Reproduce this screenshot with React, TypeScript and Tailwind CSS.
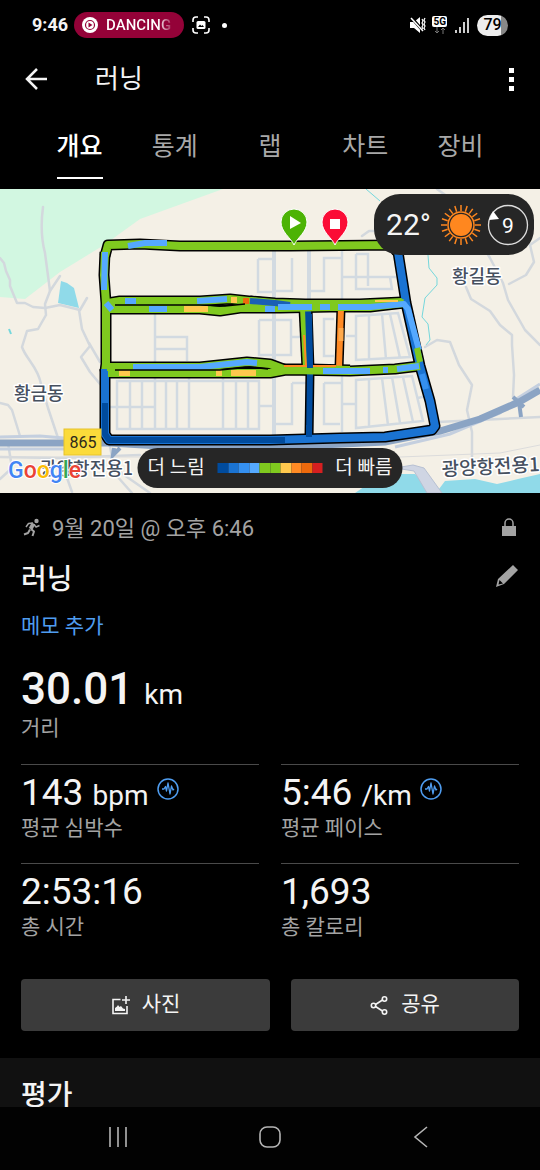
const tabs = ["개요", "통계", "랩", "차트", "장비"];

const stats = [
  { value: "143", unit: "bpm", label: "평균 심박수", hrv: true },
  { value: "5:46", unit: "/km", label: "평균 페이스", hrv: true },
  { value: "2:53:16", unit: "", label: "총 시간", hrv: false },
  { value: "1,693", unit: "", label: "총 칼로리", hrv: false },
];

const paceColors = [
  "#004b9d", "#1a73d2", "#3590f0", "#55a9ff", "#7fc91f",
  "#7fc91f", "#ffc84d", "#ff8a24", "#ee690c", "#d61f20",
];

const minorRoads = [
  "M43 207C41 222 41 238 45 253L50 291",
  "M0 258L4 263L6 271L10 280L10 286L17 303L25 303L33 307L45 308L60 305L80 310L87 298",
  "M60 276L50 291L45 304L46 315L38 329L27 331L22 347C26 359 38 367 41 384L48 408L58 438",
  "M79 310L82 329L90 346L81 357L90 372L100 384",
  "M89 343L100 362",
  "M0 403L8 405L12 410L20 436",
  "M0 457L60 458L140 455M0 479L12 468L8 443M60 458L72 492M110 447L116 475L132 493M117 470L150 493",
  "M362 236L369 231H380M437 189L455 202L478 238L490 258L503 283L508 300L525 330L540 345",
  "M509 284L526 275L534 262L530 245L540 238",
  "M466 287L471 299L490 311L500 325L512 335V345L514 375L513 397",
  "M425 347L437 340L450 342L459 365L472 385L467 410L472 432V460",
  "M400 434L438 422L540 417",
];

const blockRoads = [
  "M155 314V364M155 337H187V361M155 349H187M258 259V292H274M258 259H274M259 320V355H274M259 320H274",
  "M117 381H259V429H117ZM130 381V429M142 381V429M155 376V429M166 381V429M177 381V429M189 376V429M223 376V429M236 381V429M248 381V429M110 407H155M259 406H276",
  "M274 320H291V355H274M291 337H300M342 250V302M292 258V291H274M309 291H324V258H341",
  "M342 277H396M356 254H368V286M356 254V289H392L390 277",
  "M292 383V424H276M292 383H309M334 319H324V356H334M356 316V360L410 357L398 313ZM369 315V360M382 314L386 359M390 314L400 358M346 336H356",
  "M342 375V432M324 383H342M324 383V424H340M342 404H356M356 380V428L423 421L412 376ZM369 379V427M382 378L388 425M392 377L400 423M403 377L413 422M418 398L426 396",
];

type Segment = { d: string; color: string };

const mainRoute: Segment[] = [
  { d: "M105 256L108 245L140 244L180 246H290L392 245L397 252", color: "#7fc91f" },
  { d: "M105 252L104 275L106 303L106 309V364L105 372", color: "#7fc91f" },
  { d: "M105 369V434L109 440L180 440H270L340 438L385 437L432 430L435 426L430 401L420 366L406 303L398 252", color: "#1a73d2" },
  { d: "M108 303L120 301H200L230 299L258 302L275 304", color: "#7fc91f" },
  { d: "M108 309H200L220 311L240 308L280 308L330 307L370 307L404 303", color: "#7fc91f" },
  { d: "M250 301L275 303L305 304H360L402 302", color: "#7fc91f" },
  { d: "M107 367L115 367H200L247 362L270 364L286 370", color: "#7fc91f" },
  { d: "M108 373H270L286 370L350 371L395 369L420 366", color: "#7fc91f" },
  { d: "M280 369H308L350 370", color: "#7fc91f" },
];

const crossRoute: Segment[] = [
  { d: "M303 308L306 368", color: "#7fc91f" },
  { d: "M341 308L339 368", color: "#ff8a24" },
  { d: "M308 308L310 370L309 438", color: "#004b9d" },
];

const patches: Segment[] = [
  { d: "M128 246L145 243H167", color: "#55a9ff" },
  { d: "M105 252L104 290", color: "#55a9ff" },
  { d: "M106 303L112 310", color: "#55a9ff" },
  { d: "M125 301H136", color: "#55a9ff" },
  { d: "M149 309H167", color: "#55a9ff" },
  { d: "M197 301L227 299", color: "#55a9ff" },
  { d: "M231 300H237", color: "#ffc84d" },
  { d: "M243 301H249", color: "#ee690c" },
  { d: "M250 301L275 303L290 305", color: "#1a5fb4" },
  { d: "M184 309H208", color: "#ffc84d" },
  { d: "M265 309H275M278 307H312M320 307H330M338 307H370L404 304L408 309L419 350", color: "#55a9ff" },
  { d: "M133 367H200L247 362L257 363", color: "#55a9ff" },
  { d: "M119 373H130M216 373H222M231 373H256", color: "#ffc84d" },
  { d: "M323 371H370M383 370H388M397 369L419 366", color: "#55a9ff" },
  { d: "M417 348L420 362", color: "#7fc91f" },
  { d: "M422 374L426 389", color: "#3590f0" },
  { d: "M105 403V434L109 440L180 440H285", color: "#004b9d" },
  { d: "M309 437V425", color: "#004b9d" },
];

function MapPin({ x, color, stop }: { x: number; color: string; stop?: boolean }) {
  return (
    <g transform={`translate(${x} 244)`}>
      <path d="M0 1C-3 -6 -13 -12 -13 -22A13 13 0 0 1 13 -22C13 -12 3 -6 0 1Z" fill={color} stroke="#fff" strokeWidth="1" />
      {stop ? <rect x="-5" y="-25" width="10" height="10" fill="#fff" /> : <path d="M-4 -28L7 -21L-4 -15Z" fill="#fff" />}
    </g>
  );
}

function RouteMap() {
  return (
    <svg
      viewBox="0 189 540 304"
      preserveAspectRatio="xMidYMid slice"
      className="block h-full w-full font-['Noto_Sans_CJK_KR',sans-serif]"
      role="img"
      aria-label="러닝 경로"
    >
      <rect y="189" width="540" height="304" fill="#f4f0e6" />
      <path d="M0 189H223L140 219L104 245L60 272L25 299L0 297Z" fill="#d2f7e1" />
      <path d="M61 281L67 283L74 288L79 308L58 303Z" fill="#90dae9" />
      <path d="M355 493L383 474H415L436 493ZM436 493L445 481L475 479L497 484L518 479L540 474V493Z" fill="#90dae9" />
      <path d="M366 189L380 201M428 255L429 268L437 278V285L425 298L422 317L428 324L430 340L426 345" fill="none" stroke="#74d7dc" />
      <path d="M9 329L11 334" stroke="#74d7dc" strokeWidth="2" />

      <g fill="none" stroke="#d3d8dd" strokeWidth="2.5" strokeLinejoin="round" strokeLinecap="round">
        {minorRoads.map((d) => (
          <path key={d} d={d} />
        ))}
      </g>
      <g fill="none" stroke="#d2dae1" strokeWidth="2.5">
        {blockRoads.map((d) => (
          <path key={d} d={d} />
        ))}
        <path d="M274 250V437M309 250V300" strokeWidth="4" />
      </g>
      <path d="M275 460L400 457L500 453L540 445M0 457H140" fill="none" stroke="#dcdcdc" strokeWidth="1" />
      <path d="M395 468L413 465L424 468L442 493H427L414 471Z" fill="#cfd5e3" stroke="#b7c0d2" />
      <path d="M0 437L40 436L100 441M0 449H100M395 447L450 434L500 413L518 398L540 384" fill="none" stroke="#c4cfdf" strokeWidth="3" />
      <path d="M0 443H110L160 446L300 446L385 442L440 431L480 419L519 402L540 390" fill="none" stroke="#8ba4c4" strokeWidth="7" />
      <path d="M513 397L524 407M519 402L521 417M114 448L113 455L120 448" stroke="#8ba4c4" strokeWidth="4" fill="none" />

      <g fill="none" stroke="#000" strokeLinejoin="round">
        {mainRoute.map((s) => (
          <path key={s.d} d={s.d} strokeWidth="11" />
        ))}
        {crossRoute.map((s) => (
          <path key={s.d} d={s.d} strokeWidth="9" />
        ))}
      </g>
      <g fill="none" strokeLinejoin="round">
        {crossRoute.map((s) => (
          <path key={s.d} d={s.d} stroke={s.color} strokeWidth="6" />
        ))}
        {mainRoute.map((s) => (
          <path key={s.d} d={s.d} stroke={s.color} strokeWidth="8" />
        ))}
        {patches.map((s) => (
          <path key={s.d} d={s.d} stroke={s.color} strokeWidth="6" />
        ))}
        <path d="M304 335L306 365M284 366H336" stroke="#ff8a24" strokeWidth="2" />
        <path d="M341 328V341" stroke="#ffa94a" strokeWidth="5" />
        <path d="M375 301H398" stroke="#ffc84d" strokeWidth="2" />
        <path d="M309 314L310 368" stroke="#004b9d" strokeWidth="6" />
      </g>
      <path d="M115 305H200L225 306L245 304M115 370H220L250 367L268 369" fill="none" stroke="#000" strokeWidth="1.5" />

      <MapPin x={294} color="#4cb305" />
      <MapPin x={335} color="#fb0c36" stop />

      <g fill="#46505f" stroke="#fff" strokeWidth="3" strokeLinejoin="round" paintOrder="stroke" fontSize="18" fontWeight="500">
        <text x="452" y="283">황길동</text>
        <text x="14" y="400">황금동</text>
        <text x="40" y="475">광양항전용1</text>
        <text x="442" y="476" fontSize="19" transform="rotate(-3 442 476)">광양항전용1</text>
      </g>

      <rect x="64" y="429" width="37" height="26" fill="#fbdb3a" stroke="#e6c22c" />
      <text x="83" y="448" textAnchor="middle" fontSize="16" fill="#2d2a1c" className="font-[Roboto,sans-serif]">865</text>

      <text x="8" y="478" fontSize="23" fontWeight="500" stroke="#fff" strokeWidth="2" paintOrder="stroke" className="font-[Roboto,sans-serif]">
        <tspan fill="#4285f4">G</tspan>
        <tspan fill="#ea4335">o</tspan>
        <tspan fill="#fbbc05">o</tspan>
        <tspan fill="#4285f4">g</tspan>
        <tspan fill="#34a853">l</tspan>
        <tspan fill="#ea4335">e</tspan>
      </text>
    </svg>
  );
}

function SunIcon() {
  return (
    <svg viewBox="-20 -20 40 40" className="size-10" aria-hidden="true">
      <circle r="11" fill="#ff871f" />
      <circle r="13" fill="none" stroke="#ff871f" strokeWidth="1.5" />
      {Array.from({ length: 20 }, (_, i) => (
        <path key={i} d="M0 -14V-20" stroke="#ff871f" strokeWidth="1.5" transform={`rotate(${i * 18})`} />
      ))}
    </svg>
  );
}

function WindIcon() {
  return (
    <svg viewBox="0 0 42 42" className="size-[42px]" aria-label="바람 9">
      <circle cx="21" cy="21" r="19.5" fill="none" stroke="#ddd" strokeWidth="1.3" />
      <path d="M6 7L2 16L12 15Z" fill="#fff" />
      <text x="21" y="29" textAnchor="middle" fontSize="21" fill="#fff">9</text>
    </svg>
  );
}

function RunnerIcon() {
  return (
    <svg viewBox="0 0 22 22" className="size-[22px]" fill="none" stroke="currentColor" strokeLinejoin="round" aria-hidden="true">
      <circle cx="15.5" cy="4" r="2.2" fill="currentColor" stroke="none" />
      <path d="M12.500 6.500L9.500 12" strokeWidth="4" />
      <path d="M12 6L7.500 6.500L5 10M13 7.500L15 10L18.500 8.500" strokeWidth="1.500" />
      <path d="M10 12L13 14.500L11.500 19M9 12.500L7 16L3 17.500" strokeWidth="2" />
    </svg>
  );
}

function HrvIcon() {
  return (
    <svg viewBox="0 0 22 22" className="mt-[5px] size-[22px]" fill="none" stroke="#4f9df0" aria-hidden="true">
      <circle cx="11" cy="11" r="10" strokeWidth="1.5" />
      <path d="M5 11H7L8.500 8.500L9.500 13L11 5L13 16L14.500 8L16 12L17 11" strokeWidth="1.3" strokeLinejoin="round" />
    </svg>
  );
}

function StatusBar() {
  return (
    <div className="flex h-[50px] shrink-0 items-center justify-between px-8 font-[Roboto,sans-serif]">
      <div className="flex items-center">
        <span className="text-lg font-bold">9:46</span>
        <span className="ml-1.5 flex h-[26px] w-[110px] items-center rounded-full bg-[#940238] pl-2">
          <svg viewBox="0 0 16 16" className="size-4" aria-hidden="true">
            <circle cx="8" cy="8" r="8" fill="#fff" />
            <circle cx="8" cy="8" r="4.5" fill="none" stroke="#940238" strokeWidth="1.2" />
            <path d="M6.500 5.500L10.500 8L6.500 10.500Z" fill="#940238" />
          </svg>
          <span className="ml-2 bg-linear-to-r from-white from-80% to-white/20 bg-clip-text text-[15px] font-medium text-transparent">DANCING</span>
        </span>
        <svg viewBox="0 0 18 18" className="ml-2 size-[18px]" fill="none" stroke="#fff" strokeWidth="1.6" aria-hidden="true">
          <path d="M1 6V4A3 3 0 0 1 4 1H6M12 1H14A3 3 0 0 1 17 4V6M17 12V14A3 3 0 0 1 14 17H12M6 17H4A3 3 0 0 1 1 14V12" />
          <rect x="4.5" y="5" width="9" height="8" rx="1.5" fill="#fff" stroke="none" />
          <path d="M6 11L8 8.500L9.500 10L10.500 9L12 11Z" fill="#000" stroke="none" />
        </svg>
        <span className="ml-3 size-[5px] rounded-full bg-white" />
      </div>
      <div className="flex items-center">
        <svg viewBox="0 0 16 16" className="size-4" aria-hidden="true">
          <path d="M0 5H4L10 0V16L4 11H0Z" fill="#fff" />
          <path d="M1 0L14 15" stroke="#000" strokeWidth="3" />
          <path d="M1 1L13 14" stroke="#fff" strokeWidth="1.5" />
          <path d="M12 2L13 4L12 6L13 8L12 10L13 12M15 1L14 3L15 5L14 7L15 9L14 11L15 13" fill="none" stroke="#fff" strokeWidth="1.2" />
        </svg>
        <span className="ml-1.5 flex flex-col items-center">
          <span className="h-[11px] rounded-xs bg-white px-px text-[10px] leading-[11px] font-bold text-black">5G</span>
          <svg viewBox="0 0 12 7" className="h-[7px] w-3" fill="none" stroke="#777" aria-hidden="true">
            <path d="M3 0V6M1 4L3 6L5 4M9 7V1M7 3L9 1L11 3" />
          </svg>
        </span>
        <svg viewBox="0 0 14 16" className="ml-2 h-4 w-3.5" aria-hidden="true">
          <path d="M1 16V13M5 16V10M9 16V5M13 16V1" stroke="#fff" strokeWidth="1.6" />
        </svg>
        <span className="ml-2 flex h-[21px] w-[31px] items-center justify-center rounded-full bg-linear-to-r from-[#eee] from-78% to-[#888] to-78% text-base font-medium text-black">79</span>
      </div>
    </div>
  );
}

export default function App() {
  return (
    <div className="flex h-screen flex-col overflow-hidden bg-black font-[Roboto,'Noto_Sans_CJK_KR',sans-serif] text-[#f4f4f4]">
      <StatusBar />

      <header className="flex h-[58px] shrink-0 items-center pr-[19px] pl-[25px]">
        <button type="button" aria-label="뒤로">
          <svg viewBox="0 0 24 22" className="h-[22px] w-6" fill="none" stroke="currentColor" strokeWidth="2.5" aria-hidden="true">
            <path d="M12 1L2 11L12 21M2 11H22" />
          </svg>
        </button>
        <h1 className="ml-[46px] flex-1 text-[26px] leading-9">러닝</h1>
        <button type="button" aria-label="더보기" className="flex w-5 flex-col items-center gap-1">
          <span className="size-[5px] bg-white" />
          <span className="size-[5px] bg-white" />
          <span className="size-[5px] bg-white" />
        </button>
      </header>

      <nav className="grid h-[81px] shrink-0 grid-cols-5 px-8 pt-5">
        {tabs.map((tab, i) => (
          <div key={tab} className="flex justify-center">
            <button
              type="button"
              className={
                i === 0
                  ? "h-[51px] border-b-2 border-white pb-3 text-[25px] leading-9 font-medium text-white"
                  : "h-[51px] border-b-2 border-transparent pb-3 text-[25px] leading-9 text-[#a8a8a8]"
              }
            >
              {tab}
            </button>
          </div>
        ))}
      </nav>

      <main className="min-h-0 flex-1 overflow-y-auto [scrollbar-width:none]">
        <section className="relative h-[304px]">
          <RouteMap />
          <div className="absolute top-[5px] right-[6px] flex h-[61px] items-center rounded-[26px] bg-[#262626] pr-[5px] pl-3">
            <span className="text-[30px] leading-9">22°</span>
            <span className="ml-2.5">
              <SunIcon />
            </span>
            <span className="ml-1.5">
              <WindIcon />
            </span>
          </div>
          <div className="absolute bottom-[5px] left-1/2 flex h-10 w-[265px] -translate-x-1/2 items-center justify-between rounded-full bg-[#262626] px-[10px] text-[19px]">
            <span>더 느림</span>
            <span className="flex h-2.5 w-[105px]">
              {paceColors.map((color, i) => (
                <span key={i} className="flex-1" style={{ backgroundColor: color }} />
              ))}
            </span>
            <span>더 빠름</span>
          </div>
        </section>

        <section className="px-[21px] pt-[18px] pb-[27px]">
          <div className="flex h-[34px] items-center text-[#a3a3a3]">
            <RunnerIcon />
            <p className="ml-[9px] flex-1 text-[22px]">9월 20일 @ 오후 6:46</p>
            <svg viewBox="0 0 20 20" className="size-5" aria-label="비공개">
              <rect x="3" y="8" width="14" height="10" fill="currentColor" />
              <path d="M6 9V5A4 4 0 0 1 14 5V9" fill="none" stroke="currentColor" strokeWidth="1.5" />
            </svg>
          </div>

          <div className="mt-[15px] flex h-10 items-start justify-between">
            <h2 className="text-[28px] leading-10 font-medium">러닝</h2>
            <button type="button" aria-label="편집" className="mt-1 text-[#a3a3a3]">
              <svg viewBox="0 0 24 24" className="size-6" fill="currentColor" aria-hidden="true">
                <path d="M18 1L23 6L9 20L1 23L3 15ZM4.500 16L3.500 20.500L8 19.500Z" fillRule="evenodd" />
              </svg>
            </button>
          </div>

          <button type="button" className="mt-[11px] block h-[30px] text-[21px] leading-[30px] text-[#4f9df0]">
            메모 추가
          </button>

          <p className="mt-[23px] h-[50px] text-[44px] leading-[50px] font-medium">
            30.01 <span className="text-[28px] font-normal">km</span>
          </p>
          <p className="mt-px text-[21px] leading-[26px] text-[#a3a3a3]">거리</p>

          <div className="mt-[23px] grid grid-cols-2 gap-x-[22px]">
            {stats.map((stat) => (
              <div key={stat.label} className="h-[99px] border-t border-[#4a4a4a] pt-2">
                <div className="flex h-10 items-start gap-2">
                  <p className="text-[37px] leading-10">
                    {stat.value} <span className="text-[28px]">{stat.unit}</span>
                  </p>
                  {stat.hrv && <HrvIcon />}
                </div>
                <p className="mt-[2px] text-[21px] leading-[26px] text-[#a3a3a3]">{stat.label}</p>
              </div>
            ))}
          </div>

          <div className="mt-[17px] grid grid-cols-[249fr_228fr] gap-[21px]">
            <button type="button" className="flex h-[52px] items-center justify-center gap-3 rounded-sm bg-[#3b3b3b] text-[21px]">
              <svg viewBox="0 0 19 19" className="size-[19px]" fill="none" stroke="currentColor" strokeWidth="1.6" aria-hidden="true">
                <path d="M9.500 3.500H2V17.500H16V10M15 0V8M11 4H19" />
                <path d="M4 15V12L6 10.500L7 9L8.500 11L10 10L12 12.500L14 13V15Z" fill="currentColor" stroke="none" />
              </svg>
              사진
            </button>
            <button type="button" className="flex h-[52px] items-center justify-center gap-3 rounded-sm bg-[#3b3b3b] text-[21px]">
              <svg viewBox="0 0 19 19" className="size-[19px]" fill="none" stroke="currentColor" strokeWidth="1.6" aria-hidden="true">
                <circle cx="3.5" cy="9.5" r="2.2" />
                <circle cx="14.5" cy="3" r="2.2" />
                <circle cx="14.5" cy="16" r="2.2" />
                <path d="M5.500 8.500L12.500 4M5.500 10.500L12.500 15" />
              </svg>
              공유
            </button>
          </div>
        </section>

        <section className="bg-[#111] px-[21px] pt-[18px] pb-8">
          <h2 className="text-[28px] leading-10 font-medium">평가</h2>
        </section>
      </main>

      <footer className="flex h-[63px] shrink-0 items-center justify-between bg-[#020202] px-[107px] pb-[3px] text-[#b5b5b5]">
        <button type="button" aria-label="최근 앱">
          <svg viewBox="0 0 24 22" className="h-[22px] w-6" stroke="currentColor" strokeWidth="1.6" aria-hidden="true">
            <path d="M3 1V21M11 1V21M19 1V21" />
          </svg>
        </button>
        <button type="button" aria-label="홈">
          <svg viewBox="0 0 22 22" className="size-[22px]" fill="none" stroke="currentColor" strokeWidth="1.6" aria-hidden="true">
            <rect x="1" y="1" width="20" height="20" rx="7" />
          </svg>
        </button>
        <button type="button" aria-label="이전">
          <svg viewBox="0 0 24 22" className="h-[22px] w-6" fill="none" stroke="currentColor" strokeWidth="1.6" aria-hidden="true">
            <path d="M18 1L6 11L18 21" />
          </svg>
        </button>
      </footer>
    </div>
  );
}
